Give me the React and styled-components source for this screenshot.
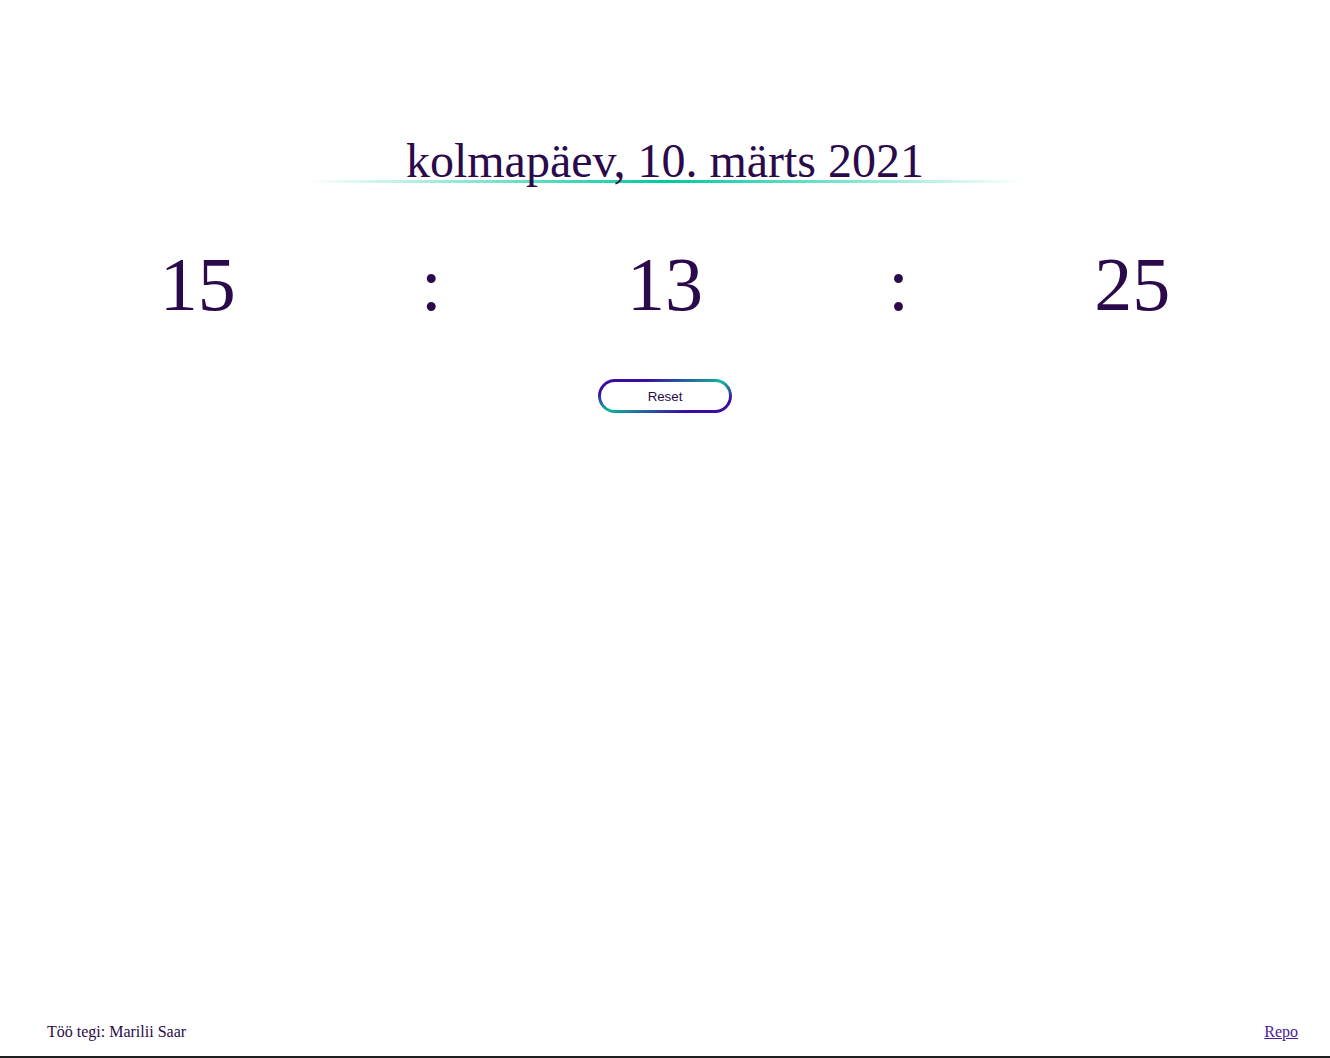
import React from 'react'
import styled, { createGlobalStyle } from 'styled-components'

const GlobalStyle = createGlobalStyle`
  html, body {
    margin: 0;
    padding: 0;
    background: #ffffff;
  }
  body {
    font-family: "Liberation Serif", "Times New Roman", serif;
    color: #2a0a4a;
  }
`

const StyledPage = styled.div`
  box-sizing: border-box;
  min-height: 100vh;
  display: flex;
  flex-direction: column;
  border-bottom: 2px solid #1e1e1e;
`

const StyledMain = styled.main`
  display: flex;
  flex-direction: column;
  align-items: center;
  padding-top: 137px;
`

const StyledDate = styled.h1`
  margin: 0;
  width: 715px;
  height: 48px;
  font-size: 48px;
  font-weight: normal;
  line-height: 48px;
  text-align: center;
  color: #2a0a4a;
  background: linear-gradient(90deg, rgba(0, 201, 160, 0) 0%, rgba(0, 201, 160, 0.5) 25%, #00c9a0 50%, rgba(0, 201, 160, 0.5) 75%, rgba(0, 201, 160, 0) 100%) no-repeat;
  background-size: 100% 3px;
  background-position: center 43px;
`

const StyledClock = styled.div`
  display: grid;
  grid-template-columns: repeat(5, 1fr);
  align-items: baseline;
  width: 1168px;
  margin-top: 61px;
`

const StyledUnit = styled.span`
  font-size: 76px;
  line-height: 76px;
  text-align: center;
  color: #2a0a4a;
`

const StyledButton = styled.button`
  margin-top: 57px;
  width: 134px;
  height: 34px;
  border: 3px solid transparent;
  border-radius: 17px;
  background:
    linear-gradient(#ffffff, #ffffff) padding-box,
    linear-gradient(to bottom right, #3a0ca3 0%, #3a0ca3 20%, #12b89b 50%, #3a0ca3 80%, #3a0ca3 100%) border-box;
  font-family: "Liberation Sans", Arial, sans-serif;
  font-size: 13.3px;
  color: #2a0a4a;
  cursor: pointer;
`

const StyledFooter = styled.footer`
  margin-top: auto;
  display: flex;
  justify-content: space-between;
  align-items: center;
  padding: 0 32px 15px 47px;
  font-size: 16px;
  color: #2a0a4a;
`

const StyledLink = styled.a`
  color: #4b1a9b;
  text-decoration: underline;
`

const pad = n => String(n).padStart(2, '0')

export default function App() {
  const time = { h: 15, m: 13, s: 25 }

  return (
    <>
      <GlobalStyle />
      <StyledPage>
        <StyledMain>
          <StyledDate>kolmapäev, 10. märts 2021</StyledDate>
          <StyledClock>
            <StyledUnit>{pad(time.h)}</StyledUnit>
            <StyledUnit>:</StyledUnit>
            <StyledUnit>{pad(time.m)}</StyledUnit>
            <StyledUnit>:</StyledUnit>
            <StyledUnit>{pad(time.s)}</StyledUnit>
          </StyledClock>
          <StyledButton>Reset</StyledButton>
        </StyledMain>
        <StyledFooter>
          <span>Töö tegi: Marilii Saar</span>
          <StyledLink href="#">Repo</StyledLink>
        </StyledFooter>
      </StyledPage>
    </>
  )
}
